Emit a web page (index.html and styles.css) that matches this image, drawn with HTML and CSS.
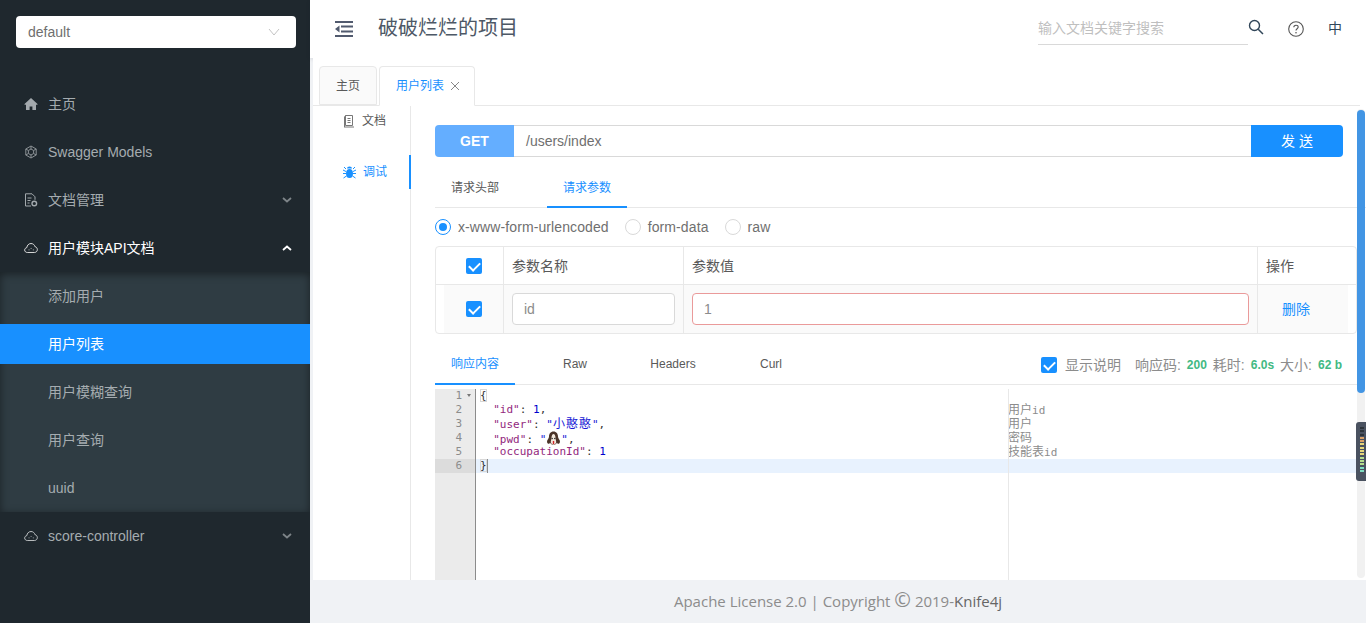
FILE: index.html
```html
<!DOCTYPE html>
<html lang="zh-CN">
<head>
  <meta charset="UTF-8">
  <title>破破烂烂的项目</title>
  <link rel="stylesheet" href="styles.css">
</head>
<body>
  <div class="layout">
    <aside class="sider">
      <div class="group-select">
        <span>default</span>
        <svg class="select-arrow" width="12" height="8" viewBox="0 0 12 8"><path d="M1 1l5 6 5-6" fill="none" stroke="#c4c4c4" stroke-width="1"/></svg>
      </div>
      <ul class="menu">
        <li class="menu-item">
          <svg class="menu-icon" width="14" height="14" viewBox="0 0 14 14"><path d="M7 1L.5 7v.8h1.500V13h3.600V9.500h2.800V13H12V7.800h1.500V7z" fill="#a3a9ad"/></svg>
          <span>主页</span>
        </li>
        <li class="menu-item">
          <svg class="menu-icon" width="14" height="14" viewBox="0 0 14 14"><g fill="none" stroke="#8b9195" stroke-width="1"><path d="M7 1l5.200 3v6L7 13l-5.200-3V4z"/><path d="M7 4l2.600 1.500v3L7 10 4.400 8.500v-3zM7 1v3M12.200 4L9.600 5.500M1.800 4l2.600 1.500M7 13v-3M12.200 10L9.600 8.500M1.800 10l2.600-1.500"/></g></svg>
          <span>Swagger Models</span>
        </li>
        <li class="menu-item">
          <svg class="menu-icon" width="14" height="14" viewBox="0 0 14 14"><g fill="none" stroke="#a3a9ad" stroke-width="1"><path d="M7 13H1.500V.8H8l3 3v3"/><path d="M3.500 5h4M3.500 7.500h3M3.500 10h2"/><circle cx="10.300" cy="10.500" r="2.300" stroke-width="1.400"/></g></svg>
          <span>文档管理</span>
          <svg class="menu-arrow" width="10" height="6" viewBox="0 0 10 6"><path d="M1 1l4 3.500L9 1" fill="none" stroke="#7d8488" stroke-width="1.800"/></svg>
        </li>
        <li class="menu-item open">
          <svg class="menu-icon" width="15" height="12" viewBox="0 0 15 12"><path d="M3.500 10.800C2 10.800.7 9.700.7 8.200c0-1.300 1-2.400 2.300-2.600C3.300 3.200 5 1.200 7.500 1.200c2.200 0 3.800 1.500 4.200 3.300 1.500.3 2.600 1.700 2.600 3.200 0 1.700-1.300 3.100-3 3.100z" fill="none" stroke="#e8e8e8" stroke-width="1"/><path d="M5 8h.8M7.200 6.500H8M9.500 8h.8" stroke="#e8e8e8" stroke-width="1"/></svg>
          <span>用户模块API文档</span>
          <svg class="menu-arrow" width="10" height="6" viewBox="0 0 10 6"><path d="M1 5l4-3.500L9 5" fill="none" stroke="#fff" stroke-width="1.800"/></svg>
        </li>
        <li class="submenu">
          <div class="sub-item">添加用户</div>
          <div class="sub-item active">用户列表</div>
          <div class="sub-item">用户模糊查询</div>
          <div class="sub-item">用户查询</div>
          <div class="sub-item">uuid</div>
        </li>
        <li class="menu-item">
          <svg class="menu-icon" width="15" height="12" viewBox="0 0 15 12"><path d="M3.500 10.800C2 10.800.7 9.700.7 8.200c0-1.300 1-2.400 2.300-2.600C3.300 3.200 5 1.200 7.500 1.200c2.200 0 3.800 1.500 4.200 3.300 1.500.3 2.600 1.700 2.600 3.200 0 1.700-1.300 3.100-3 3.100z" fill="none" stroke="#c8cbcd" stroke-width="1"/><path d="M5 8h.8M7.200 6.500H8M9.500 8h.8" stroke="#c8cbcd" stroke-width="1"/></svg>
          <span>score-controller</span>
          <svg class="menu-arrow" width="10" height="6" viewBox="0 0 10 6"><path d="M1 1l4 3.500L9 1" fill="none" stroke="#7d8488" stroke-width="1.800"/></svg>
        </li>
      </ul>
    </aside>

    <div class="main">
      <header class="topbar">
        <svg class="trigger" width="18" height="16" viewBox="0 0 18 16"><g fill="#515a6e"><rect y="0" width="18" height="2"/><rect x="6" y="4.500" width="12" height="2"/><rect x="6" y="9.500" width="12" height="2"/><rect y="14" width="18" height="2"/><path d="M0 8l4.500-3.500v7z"/></g></svg>
        <h1 class="project-title">破破烂烂的项目</h1>
        <div class="search-box">输入文档关键字搜索</div>
        <svg class="search-icon" width="16" height="16" viewBox="0 0 16 16"><circle cx="6.500" cy="6.500" r="5" fill="none" stroke="#314659" stroke-width="1.400"/><path d="M10.200 10.200L15 15" stroke="#314659" stroke-width="1.500"/></svg>
        <svg class="help-icon" width="16" height="16" viewBox="0 0 16 16"><circle cx="8" cy="8" r="7.300" fill="none" stroke="#555" stroke-width="1.100"/><path d="M5.800 6.300C5.800 5 6.800 4.200 8 4.200c1.300 0 2.200.8 2.200 1.900 0 1.700-2.200 1.700-2.200 3.500" fill="none" stroke="#555" stroke-width="1.100"/><circle cx="8" cy="11.700" r=".8" fill="#555"/></svg>
        <span class="lang">中</span>
      </header>

      <div class="content">
        <div class="tabs">
          <div class="tab">主页</div>
          <div class="tab current">用户列表
            <svg width="10" height="10" viewBox="0 0 10 10"><path d="M1 1l8 8M9 1l-8 8" stroke="#888" stroke-width="1"/></svg>
          </div>
        </div>

        <div class="page">
          <div class="side-tabs">
            <div class="side-tab">
              <svg width="12" height="14" viewBox="0 0 12 14"><g fill="none" stroke="#777" stroke-width="1"><path d="M2.500 1.500h7v10h-7zM1 13h10M2.500 1.500L1.500 3v10M4.500 4.500h3M4.500 6.500h3M4.500 8.500h3"/></g></svg>
              <span>文档</span>
            </div>
            <div class="side-tab active">
              <svg width="13" height="13" viewBox="0 0 13 13"><g fill="#1890ff"><ellipse cx="6.500" cy="7.500" rx="3.500" ry="4.500"/><path d="M4 2.500a2.500 2 0 0 1 5 0z"/></g><path d="M0 4l3 1.500M13 4l-3 1.500M0 7.500h3M13 7.500h-3M.5 12l3-2M12.500 12l-3-2M1 1l2 2M12 1l-2 2" stroke="#1890ff"/></svg>
              <span>调试</span>
            </div>
          </div>

          <div class="debug">
            <div class="url-bar">
              <div class="method">GET</div>
              <div class="url">/users/index</div>
              <div class="send">发 送</div>
            </div>

            <div class="inner-tabs req-tabs">
              <div class="inner-tab">请求头部</div>
              <div class="inner-tab active">请求参数</div>
            </div>

            <div class="radios">
              <label class="radio checked"><i></i>x-www-form-urlencoded</label>
              <label class="radio"><i></i>form-data</label>
              <label class="radio"><i></i>raw</label>
            </div>

            <div class="param-table">
              <div class="param-row head">
                <div class="cell cell-check"><span class="check"></span></div>
                <div class="cell cell-name">参数名称</div>
                <div class="cell cell-value">参数值</div>
                <div class="cell cell-op">操作</div>
              </div>
              <div class="param-row body">
                <div class="cell cell-check"><span class="check"></span></div>
                <div class="cell cell-name"><div class="text-input">id</div></div>
                <div class="cell cell-value"><div class="text-input required">1</div></div>
                <div class="cell cell-op"><a class="del">删除</a></div>
              </div>
            </div>

            <div class="inner-tabs resp-tabs">
              <div class="inner-tab active">响应内容</div>
              <div class="inner-tab">Raw</div>
              <div class="inner-tab">Headers</div>
              <div class="inner-tab">Curl</div>
              <div class="resp-info">
                <span class="check"></span>
                <span class="show-desc">显示说明</span>
                <span>响应码:</span><b>200</b>
                <span>耗时:</span><b>6.0s</b>
                <span>大小:</span><b>62 b</b>
              </div>
            </div>

            <div class="editor">
              <div class="gutter">
                <div class="ln fold">1<i></i></div>
                <div class="ln">2</div>
                <div class="ln">3</div>
                <div class="ln">4</div>
                <div class="ln">5</div>
                <div class="ln now">6</div>
              </div>
              <div class="code">
                <div class="line"><span class="bracket">{</span></div>
                <div class="line">  <span class="key">"id"</span>: <span class="num">1</span>,<span class="note"><span class="cn">用户</span>id</span></div>
                <div class="line">  <span class="key">"user"</span>: <span class="str">"<span class="cn wide">小憨憨</span>"</span>,<span class="note"><span class="cn">用户</span></span></div>
                <div class="line">  <span class="key">"pwd"</span>: <span class="str">"<svg class="emoji" width="15" height="15" viewBox="0 0 15 15"><path d="M7.500 .5C4.500.5 3 3 3 5.500c0 1-.5 2-1.500 3.500-.6 1-.7 2.500.3 3.500 1 .8 2 0 2.200-1 .6 1.500 2 2.500 3.500 2.500s2.900-1 3.500-2.500c.2 1 1.200 1.800 2.200 1 1-1 .9-2.500.3-3.500C12.500 7.500 12 6.500 12 5.500 12 3 10.500.5 7.500.5z" fill="#4a3328"/><path d="M7.500 3C6.500 3 5.500 4.500 5.500 7c0 1.500-1 3-.6 4.500.4 1.400 1.500 2.200 2.600 2.200s2.200-.8 2.600-2.200c.4-1.500-.6-3-.6-4.500 0-2.500-1-4-2-4z" fill="#f3e8dc"/><circle cx="6.200" cy="7.500" r=".7" fill="#222"/><circle cx="8.800" cy="7.500" r=".7" fill="#222"/><path d="M6.800 10h1.400v3H6.800z" fill="#d2232a"/></svg>"</span>,<span class="note"><span class="cn">密码</span></span></div>
                <div class="line">  <span class="key">"occupationId"</span>: <span class="num">1</span><span class="note"><span class="cn">技能表</span>id</span></div>
                <div class="line current"><span class="bracket">}</span><span class="cursor"></span></div>
              </div>
              <div class="desc-rule"></div>
            </div>
          </div>
        </div>

        <div class="scroll-track"><div class="scroll-thumb"></div></div>
        <div class="minimap">
          <i class="m1"></i><i class="m1"></i><i class="m1"></i><i class="m2"></i><i class="m2"></i><i class="m3"></i><i class="m3"></i><i class="m3"></i><i class="m3"></i><i class="m5"></i><i class="m5"></i><i class="m5"></i><i class="m4"></i><i class="m4"></i>
        </div>
      </div>

      <footer class="footer">Apache License 2.0 | Copyright <span class="copy">©</span> 2019-<span class="brand">Knife4j</span></footer>
    </div>
  </div>
</body>
</html>
```

FILE: styles.css
```css
* {
  box-sizing: border-box;
}
html, body {
  margin: 0;
  padding: 0;
  height: 100%;
  overflow: hidden;
}
body {
  font-family: "Liberation Sans", Arial, "Noto Sans CJK SC", sans-serif;
  font-size: 14px;
  line-height: 22px;
  color: #595959;
  background-color: #f0f2f5;
}
.layout {
  display: flex;
  height: 623px;
}

/* left menu */
.sider {
  width: 310px;
  flex-shrink: 0;
  background-color: #1f282e;
  color: #a5acb0;
}
.group-select {
  height: 32px;
  margin: 16px 14px 0 16px;
  padding: 0 16px 0 12px;
  display: flex;
  align-items: center;
  justify-content: space-between;
  background-color: #fff;
  border-radius: 4px;
  color: #6f6f6f;
}
.menu {
  list-style: none;
  margin: 0;
  padding: 0;
  margin-top: 32px;
}
.menu-item {
  height: 48px;
  display: flex;
  align-items: center;
  padding-left: 24px;
  padding-right: 18px;
  position: relative;
}
.menu-item .menu-icon {
  margin-right: 10px;
  width: 14px;
  flex-shrink: 0;
}
.menu-arrow {
  margin-left: auto;
}
.menu-item.open {
  color: #fff;
}
.submenu {
  padding: 4px 0;
  background-color: #2f3c43;
  box-shadow: inset 0 2px 8px rgba(0,0,0,0.45);
}
.sub-item {
  height: 40px;
  line-height: 40px;
  margin-bottom: 8px;
  padding-left: 48px;
  color: #a5acb0;
}
.sub-item:last-child {
  margin-bottom: 0;
}
.sub-item.active {
  background-color: #1890ff;
  color: #fff;
}

/* top bar */
.main {
  flex: 1;
  min-width: 0;
  display: flex;
  flex-direction: column;
}
.topbar {
  height: 58px;
  flex-shrink: 0;
  display: flex;
  align-items: center;
  background-color: #fff;
  box-shadow: 0 1px 4px rgba(0,21,41,0.12);
  position: relative;
  padding-left: 25px;
}
.project-title {
  margin: 0 0 2px 25px;
  font-size: 20px;
  line-height: 28px;
  font-weight: 400;
  color: #4d5866;
}
.search-box {
  margin-left: auto;
  width: 210px;
  height: 32px;
  padding-top: 4px;
  border-bottom: 1px solid #d9d9d9;
  color: #bfbfbf;
  font-size: 14px;
}
.search-icon {
  margin-bottom: 4px;
}
.help-icon {
  margin-left: 24px;
}
.lang {
  margin: 0 24px 2px 24px;
  font-size: 14px;
  color: #314659;
}

/* tabs row */
.content {
  flex: 1;
  min-height: 0;
  margin-left: 3px;
  background-color: #fff;
  position: relative;
  overflow: hidden;
}
.tabs {
  height: 48px;
  display: flex;
  align-items: flex-end;
  padding-left: 6px;
  margin-right: 6px;
  border-bottom: 1px solid #e8e8e8;
  position: relative;
}
.tab {
  height: 39px;
  padding: 0 16px;
  margin-right: 2px;
  display: flex;
  align-items: center;
  gap: 6px;
  font-size: 12px;
  color: #595959;
  background-color: #fafafa;
  border: 1px solid #e8e8e8;
  border-radius: 4px 4px 0 0;
}
.tab.current {
  height: 40px;
  padding-right: 14px;
  background-color: #fff;
  color: #1890ff;
  border-bottom-color: #fff;
  margin-bottom: -1px;
}

/* page body */
.page {
  display: flex;
  height: 474px;
  overflow: hidden;
}
.side-tabs {
  width: 98px;
  flex-shrink: 0;
  border-right: 1px solid #e8e8e8;
  font-size: 12px;
}
.side-tab {
  height: 34px;
  display: flex;
  align-items: center;
  padding-left: 30px;
  gap: 7px;
  color: #595959;
}
.side-tab:first-child {
  height: 30px;
  margin-bottom: 19px;
}
.side-tab.active {
  color: #1890ff;
  margin-right: -1px;
  border-right: 2px solid #1890ff;
}
.debug {
  flex: 1;
  min-width: 0;
  padding: 19px 0 0 24px;
}
.url-bar {
  display: flex;
  height: 32px;
  width: 908px;
}
.method {
  width: 79px;
  background-color: #64aeff;
  color: #fff;
  font-weight: 700;
  text-align: center;
  line-height: 32px;
  border-radius: 4px 0 0 4px;
}
.url {
  flex: 1;
  padding-left: 12px;
  line-height: 30px;
  border-top: 1px solid #d9d9d9;
  border-bottom: 1px solid #d9d9d9;
  color: #6f6f6f;
}
.send {
  width: 92px;
  background-color: #1890ff;
  color: #fff;
  text-align: center;
  line-height: 32px;
  border-radius: 0 4px 4px 0;
}

.inner-tabs {
  display: flex;
  font-size: 12px;
  border-bottom: 1px solid #e8e8e8;
}
.req-tabs {
  height: 35px;
  margin-top: 16px;
}
.inner-tab {
  width: 112px;
  text-align: center;
  margin-bottom: -1px;
  color: #595959;
}
.inner-tab.active {
  color: #1890ff;
  border-bottom: 2px solid #1890ff;
}
.req-tabs .inner-tab {
  height: 35px;
  line-height: 30px;
}
.req-tabs .inner-tab:first-child {
  width: 80px;
  margin-right: 32px;
}
.req-tabs .inner-tab.active {
  width: 80px;
}

.radios {
  display: flex;
  height: 38px;
  align-items: center;
  color: #6f6f6f;
  letter-spacing: .1px;
}
.radio {
  display: flex;
  align-items: center;
  margin-right: 16px;
}
.radio i {
  width: 16px;
  height: 16px;
  margin-right: 7px;
  border: 1px solid #d9d9d9;
  border-radius: 50%;
  position: relative;
}
.radio.checked i {
  border-color: #1890ff;
}
.radio.checked i::after {
  content: "";
  position: absolute;
  left: 3px;
  top: 3px;
  width: 8px;
  height: 8px;
  border-radius: 50%;
  background-color: #1890ff;
}

.param-table {
  width: 922px;
  height: 88px;
  border: 1px solid #e8e8e8;
  border-radius: 4px;
}
.param-row {
  display: flex;
}
.param-row.head {
  height: 38px;
  border-bottom: 1px solid #e8e8e8;
}
.param-row.body {
  height: 48px;
  margin-left: 8px;
  margin-right: 8px;
  background-color: #fafafa;
}
.cell {
  display: flex;
  align-items: center;
  padding-left: 8px;
  border-right: 1px solid #e8e8e8;
}
.cell-check {
  width: 68px;
  padding-left: 30px;
}
.cell-name {
  width: 180px;
}
.cell-value {
  width: 574px;
}
.cell-op {
  flex: 1;
  border-right: 0;
}
.body .cell-check {
  width: 60px;
  padding-left: 22px;
}
.body .cell-op {
  justify-content: center;
  padding-left: 0;
  padding-right: 14px;
}
.check {
  display: inline-block;
  width: 16px;
  height: 16px;
  border-radius: 2px;
  background-color: #1890ff;
  position: relative;
}
.check::after {
  content: "";
  position: absolute;
  left: 5px;
  top: 2px;
  width: 5px;
  height: 9px;
  border: solid #fff;
  border-width: 0 2px 2px 0;
  transform: rotate(45deg);
}
.text-input {
  height: 32px;
  width: 100%;
  padding-left: 11px;
  line-height: 30px;
  color: #8c8c8c;
  background-color: #fff;
  border: 1px solid #d9d9d9;
  border-radius: 4px;
}
.text-input.required {
  border-color: #ea9a9a;
}
.cell-name .text-input {
  width: 163px;
}
.cell-value .text-input {
  width: 557px;
}
.del {
  color: #1890ff;
}

.resp-tabs {
  margin-top: 12px;
  height: 39px;
  align-items: flex-start;
  width: 922px;
}
.resp-tabs .inner-tab {
  height: 39px;
  line-height: 37px;
  width: 80px;
  margin-right: 0;
}
.resp-tabs .inner-tab:nth-child(2) { width: 120px; }
.resp-tabs .inner-tab:nth-child(3) { width: 76px; }
.resp-tabs .inner-tab:nth-child(4) { width: 120px; }
.resp-info {
  margin-left: auto;
  display: flex;
  align-items: center;
  height: 37px;
  padding-right: 15px;
  font-size: 14px;
  color: #8c8c8c;
}
.resp-info .check {
  margin-right: 8px;
}
.show-desc {
  margin-right: 14px;
}
.resp-info b {
  margin: 0 6px;
  font-size: 12px;
  color: #42b983;
}
.resp-info b:last-child {
  margin-right: 0;
}

/* ace style editor */
.editor {
  display: flex;
  height: 195px;
  margin-top: 4px;
  width: 922px;
  font-family: "DejaVu Sans Mono", "Noto Sans CJK SC", monospace;
  font-size: 11px;
  line-height: 14px;
  position: relative;
}
.gutter {
  width: 41px;
  flex-shrink: 0;
  background-color: #ebebeb;
  border-right: 1px solid #8c8c8c;
  color: #8c8c8c;
}
.ln {
  height: 14px;
  padding-right: 13px;
  text-align: right;
  position: relative;
}
.ln.now {
  background-color: #dcdcdc;
}
.fold i {
  position: absolute;
  right: 4px;
  top: 5px;
  border: solid transparent;
  border-width: 3px 2.500px 0;
  border-top-color: #777;
}
.code {
  flex: 1;
  min-width: 0;
  color: #333;
}
.line {
  height: 14px;
  padding-left: 4px;
  white-space: pre;
  position: relative;
}
.line.current {
  background-color: #e8f2fe;
}
.key {
  color: #92277d;
}
.num {
  color: #0000cd;
}
.str {
  color: #1a1ad6;
}
.cn {
  font-size: 12px;
}
.cn.wide {
  letter-spacing: 1px;
}
.emoji {
  vertical-align: -3px;
}
.bracket {
  outline: 1px solid #d8d8d8;
  outline-offset: -1px;
}
.cursor {
  display: inline-block;
  width: 1px;
  height: 14px;
  background-color: #8c8c8c;
  vertical-align: top;
}
.note {
  position: absolute;
  left: 532px;
  top: 0;
  color: #8c8c8c;
}
.desc-rule {
  position: absolute;
  left: 573px;
  top: 0;
  bottom: 0;
  width: 1px;
  background-color: #e8e8e8;
}

/* scrollbar and minimap */
.scroll-track {
  position: absolute;
  right: 1px;
  top: 51px;
  width: 8px;
  height: 469px;
  padding-top: 1px;
  background-color: #f1f1f1;
  border-radius: 4px;
}
.scroll-thumb {
  height: 283px;
  background-color: #4295e4;
  border-radius: 4px;
}
.minimap {
  position: absolute;
  right: 0;
  top: 364px;
  width: 10px;
  height: 59px;
  padding: 5px 2px 0 4px;
  background-color: #4a5260;
  border-radius: 3px 0 0 3px;
  display: flex;
  flex-direction: column;
  gap: 1.300px;
}
.minimap i {
  height: 2px;
  display: block;
}
.m1 { background-color: #2c333a; }
.m2 { background-color: #d9a066; }
.m3 { background-color: #e5d67a; }
.m5 { background-color: #b4dc8c; }
.m4 { background-color: #7ddcc0; }

.footer {
  height: 43px;
  flex-shrink: 0;
  line-height: 43px;
  text-align: center;
  font-family: "Open Sans", sans-serif;
  font-size: 15px;
  color: #8c8c8c;
  background-color: #f0f2f5;
}
.copy {
  font-size: 20px;
  line-height: 1;
}
.brand {
  color: #666;
}
```
